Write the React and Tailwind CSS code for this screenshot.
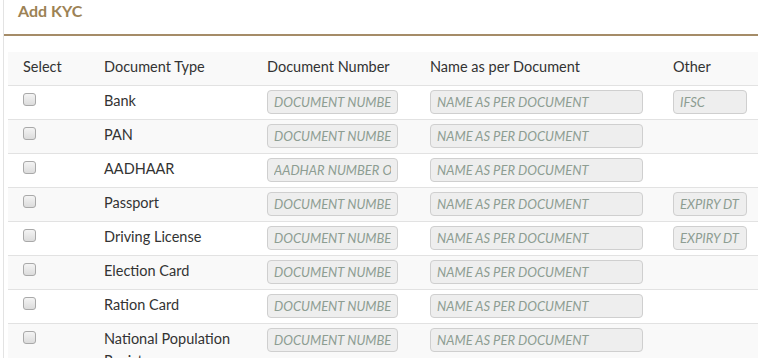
import React from 'react';

const rows = [
    { type: 'Bank', number: 'DOCUMENT NUMBER', other: 'IFSC' },
    { type: 'PAN', number: 'DOCUMENT NUMBER' },
    { type: 'AADHAAR', number: 'AADHAR NUMBER OR ENROLMENT NO' },
    { type: 'Passport', number: 'DOCUMENT NUMBER', other: 'EXPIRY DT' },
    { type: 'Driving License', number: 'DOCUMENT NUMBER', other: 'EXPIRY DT' },
    { type: 'Election Card', number: 'DOCUMENT NUMBER' },
    { type: 'Ration Card', number: 'DOCUMENT NUMBER' },
    { type: 'National Population Register', number: 'DOCUMENT NUMBER' },
];

const Field = ({ placeholder, width }) => (
    <input
        type="text"
        placeholder={placeholder}
        readOnly
        className={`${width} h-[24px] px-[6px] bg-[#eeeeee] border border-[#cfcfcf] rounded-[4px] text-[13px] italic uppercase placeholder:text-[#8d9d92] focus:outline-none`}
    />
);

const Check = () => (
    <div className="w-[13px] h-[13px] mt-[2px] rounded-[3px] border border-[#a9a9a9] bg-gradient-to-b from-[#f4f4f4] to-[#dcdcdc]" />
);

const App = () => {
    return (
        <div className="min-h-screen bg-white pl-[3px] font-['Lato','Open_Sans',sans-serif] text-[#333]">
            <div className="border-l border-[#e3e3e3] min-h-screen">
                <div className="h-[34px] pl-[14px] text-[16px] leading-[20px] pt-[1px] font-bold text-[#9c8255]">
                    Add KYC
                </div>
                <div className="h-[2px] bg-[#a58c68]" />
                <div className="pt-[16px] pl-[4px]">
                    <table className="w-full border-collapse table-fixed text-[14.5px] text-left">
                        <colgroup>
                            <col className="w-[81px]" />
                            <col className="w-[163px]" />
                            <col className="w-[163px]" />
                            <col className="w-[243px]" />
                            <col />
                        </colgroup>
                        <thead>
                            <tr className="bg-[#f9f9f9] align-top">
                                <th className="pl-[15px] pt-[5px] h-[33px] font-normal leading-[20px]">Select</th>
                                <th className="pl-[15px] pt-[5px] font-normal leading-[20px]">Document Type</th>
                                <th className="pl-[15px] pt-[5px] font-normal leading-[20px]">Document Number</th>
                                <th className="pl-[15px] pt-[5px] font-normal leading-[20px]">Name as per Document</th>
                                <th className="pl-[15px] pt-[5px] font-normal leading-[20px]">Other</th>
                            </tr>
                        </thead>
                        <tbody>
                            {rows.map((row, i) => (
                                <tr
                                    key={row.type}
                                    className={`border-t border-[#e2e2e2] align-top ${i % 2 === 1 ? 'bg-[#f9f9f9]' : 'bg-white'}`}
                                >
                                    <td className="pl-[15px] pt-[5px] h-[34px]">
                                        <Check />
                                    </td>
                                    <td className="pl-[15px] pr-[20px] pt-[4px] leading-[22px]">{row.type}</td>
                                    <td className="pl-[15px] pt-[4px] pb-[5px]">
                                        <Field placeholder={row.number} width="w-[131px]" />
                                    </td>
                                    <td className="pl-[15px] pt-[4px] pb-[5px]">
                                        <Field placeholder="NAME AS PER DOCUMENT" width="w-[213px]" />
                                    </td>
                                    <td className="pl-[15px] pt-[4px] pb-[5px]">
                                        {row.other && <Field placeholder={row.other} width="w-[74px]" />}
                                    </td>
                                </tr>
                            ))}
                        </tbody>
                    </table>
                </div>
            </div>
        </div>
    );
};

export default App;
